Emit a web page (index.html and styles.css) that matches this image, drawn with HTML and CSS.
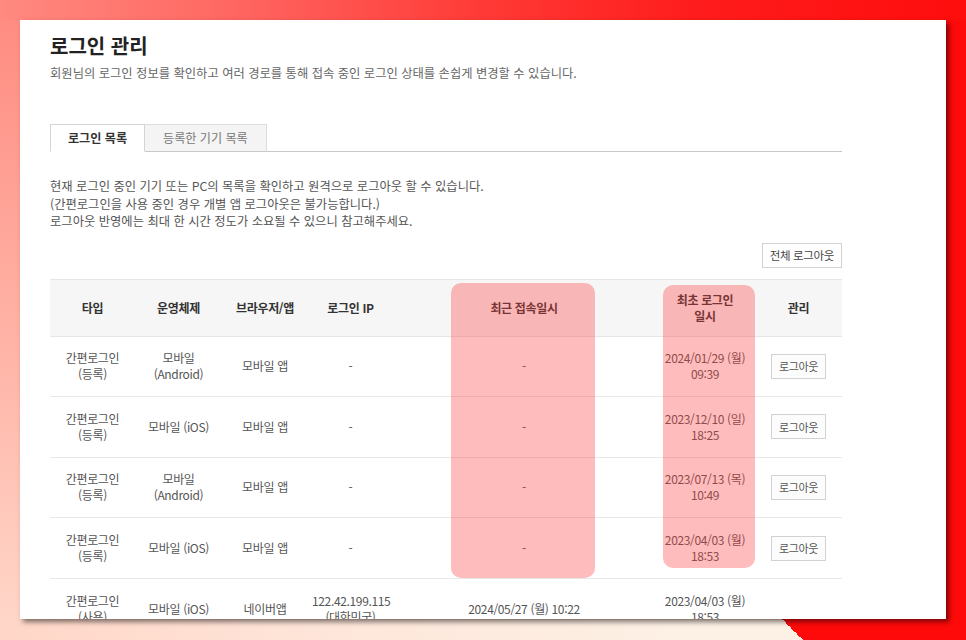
FILE: index.html
```html
<!DOCTYPE html>
<html lang="ko">
<head>
<meta charset="utf-8">
<title>로그인 관리</title>
<link rel="stylesheet" href="styles.css">
</head>
<body>
<div class="card">
  <h1 class="title">로그인 관리</h1>
  <p class="subtitle">회원님의 로그인 정보를 확인하고 여러 경로를 통해 접속 중인 로그인 상태를 손쉽게 변경할 수 있습니다.</p>

  <div class="tabs">
    <div class="tab active">로그인 목록</div>
    <div class="tab">등록한 기기 목록</div>
    <div class="tab-rest"></div>
  </div>

  <div class="desc">
    <p>현재 로그인 중인 기기 또는 PC의 목록을 확인하고 원격으로 로그아웃 할 수 있습니다.</p>
    <p>(간편로그인을 사용 중인 경우 개별 앱 로그아웃은 불가능합니다.)</p>
    <p>로그아웃 반영에는 최대 한 시간 정도가 소요될 수 있으니 참고해주세요.</p>
  </div>

  <div class="actions">
    <button class="btn">전체 로그아웃</button>
  </div>

  <div class="table-wrap">
    <table class="list">
      <colgroup>
        <col class="c1"><col class="c2"><col class="c3"><col class="c4"><col class="c5"><col class="c6"><col class="c7">
      </colgroup>
      <thead>
        <tr>
          <th>타입</th>
          <th>운영체제</th>
          <th>브라우저/앱</th>
          <th>로그인 IP</th>
          <th>최근 접속일시</th>
          <th>최초 로그인<br>일시</th>
          <th>관리</th>
        </tr>
      </thead>
      <tbody>
        <tr>
          <td>간편로그인<br>(등록)</td>
          <td>모바일<br>(Android)</td>
          <td>모바일 앱</td>
          <td>-</td>
          <td>-</td>
          <td>2024/01/29 (월)<br>09:39</td>
          <td><button class="btn small">로그아웃</button></td>
        </tr>
        <tr>
          <td>간편로그인<br>(등록)</td>
          <td>모바일 (iOS)</td>
          <td>모바일 앱</td>
          <td>-</td>
          <td>-</td>
          <td>2023/12/10 (일)<br>18:25</td>
          <td><button class="btn small">로그아웃</button></td>
        </tr>
        <tr>
          <td>간편로그인<br>(등록)</td>
          <td>모바일<br>(Android)</td>
          <td>모바일 앱</td>
          <td>-</td>
          <td>-</td>
          <td>2023/07/13 (목)<br>10:49</td>
          <td><button class="btn small">로그아웃</button></td>
        </tr>
        <tr>
          <td>간편로그인<br>(등록)</td>
          <td>모바일 (iOS)</td>
          <td>모바일 앱</td>
          <td>-</td>
          <td>-</td>
          <td>2023/04/03 (월)<br>18:53</td>
          <td><button class="btn small">로그아웃</button></td>
        </tr>
        <tr>
          <td>간편로그인<br>(사용)</td>
          <td>모바일 (iOS)</td>
          <td>네이버앱</td>
          <td>122.42.199.115<br>(대한민국)</td>
          <td>2024/05/27 (월) 10:22</td>
          <td>2023/04/03 (월)<br>18:53</td>
          <td></td>
        </tr>
      </tbody>
    </table>
    <div class="mark mark-recent"></div>
    <div class="mark mark-first"></div>
  </div>
</div>
</body>
</html>
```

FILE: styles.css
```css
* { box-sizing: border-box; }

html, body {
  margin: 0;
  width: 966px;
  height: 640px;
  overflow: hidden;
}

body {
  padding: 20px 0 0 20px;
  font-family: "Noto Sans CJK KR", "Noto Sans", sans-serif;
  background:
    linear-gradient(to right, #ff8a80 0%, #ff6560 25%, #ff3a36 50%, #ff1c1c 72%, #ff0d0d 100%) top left / 100% 20px no-repeat,
    linear-gradient(45deg, transparent 50%, #ff0a0a 50%) 0 0 / 100% 100% no-repeat,
    linear-gradient(to right, #ffd6c7 0%, #fee6da 35%, #fdf0e4 70%, #fdf1e5 100%) bottom left / 100% 20px no-repeat,
    linear-gradient(to bottom, #ff8a80 0%, #ffb1a4 50%, #ffd8ca 100%);
}

.card {
  width: 926px;
  height: 599px;
  background: #fff;
  overflow: hidden;
  padding: 14px 104px 0 30px;
  box-shadow: 3px 3px 5px rgba(0, 0, 0, 0.5);
}

.title {
  margin: 0;
  font-size: 20px;
  line-height: 24px;
  font-weight: 700;
  color: #222;
}

.subtitle {
  margin: 6px 0 0;
  font-size: 12.3px;
  line-height: 18px;
  color: #666;
}

.tabs {
  display: flex;
  margin-top: 42px;
  height: 28px;
}

.tab {
  height: 28px;
  line-height: 26px;
  font-size: 12.1px;
  color: #777;
  text-align: center;
  background: #f4f4f4;
  border-top: 1px solid #dcdcdc;
  border-right: 1px solid #dcdcdc;
  border-bottom: 1px solid #c8c8c8;
  padding: 0 18px;
}

.tab.active {
  width: 95px;
  padding: 0;
  background: #fff;
  color: #333;
  font-weight: 700;
  border-left: 1px solid #d4d4d4;
  border-top: 1px solid #d4d4d4;
  border-right: 1px solid #d4d4d4;
  border-bottom: 1px solid #fff;
}

.tab-rest {
  flex: 1;
  border-bottom: 1px solid #c8c8c8;
}

.desc {
  margin-top: 26px;
}

.desc p {
  margin: 0;
  font-size: 12.3px;
  line-height: 17.5px;
  color: #555;
}

.actions {
  display: flex;
  justify-content: flex-end;
  margin-top: 12px;
}

.btn {
  font-family: "Noto Sans CJK KR", "Noto Sans", sans-serif;
  height: 25px;
  padding: 0 7px;
  font-size: 11.5px;
  letter-spacing: -0.35px;
  color: #444;
  background: #fff;
  border: 1px solid #d2d2d2;
  border-radius: 0;
}

.btn.small {
  font-size: 11px;
  padding: 0 7px;
  color: #555;
  background: #fcfcfc;
}

.table-wrap {
  position: relative;
  margin-top: 11px;
}

.list {
  width: 792px;
  table-layout: fixed;
  border-collapse: collapse;
  border-top: 1px solid #e6e6e6;
}

.c1 { width: 85px; }
.c2 { width: 87px; }
.c3 { width: 86px; }
.c4 { width: 85px; }
.c5 { width: 262px; }
.c6 { width: 100px; }
.c7 { width: 87px; }

.list th {
  height: 57px;
  background: #f6f6f6;
  font-size: 12px;
  font-weight: 700;
  color: #333;
  line-height: 16px;
  letter-spacing: -0.35px;
  border-bottom: 1px solid #e6e6e6;
  text-align: center;
  vertical-align: middle;
  padding: 0 4px;
}

.list td {
  height: 60.6px;
  font-size: 12px;
  color: #555;
  line-height: 16px;
  letter-spacing: -0.35px;
  border-bottom: 1px solid #e8e8e8;
  text-align: center;
  vertical-align: middle;
  padding: 0 4px;
}

.mark {
  position: absolute;
  background: rgba(255, 60, 60, 0.34);
  border-radius: 10px;
  pointer-events: none;
}

.mark-recent {
  left: 401px;
  top: 4px;
  width: 144px;
  height: 295px;
}

.mark-first {
  left: 613px;
  top: 6px;
  width: 92px;
  height: 283px;
}
```
